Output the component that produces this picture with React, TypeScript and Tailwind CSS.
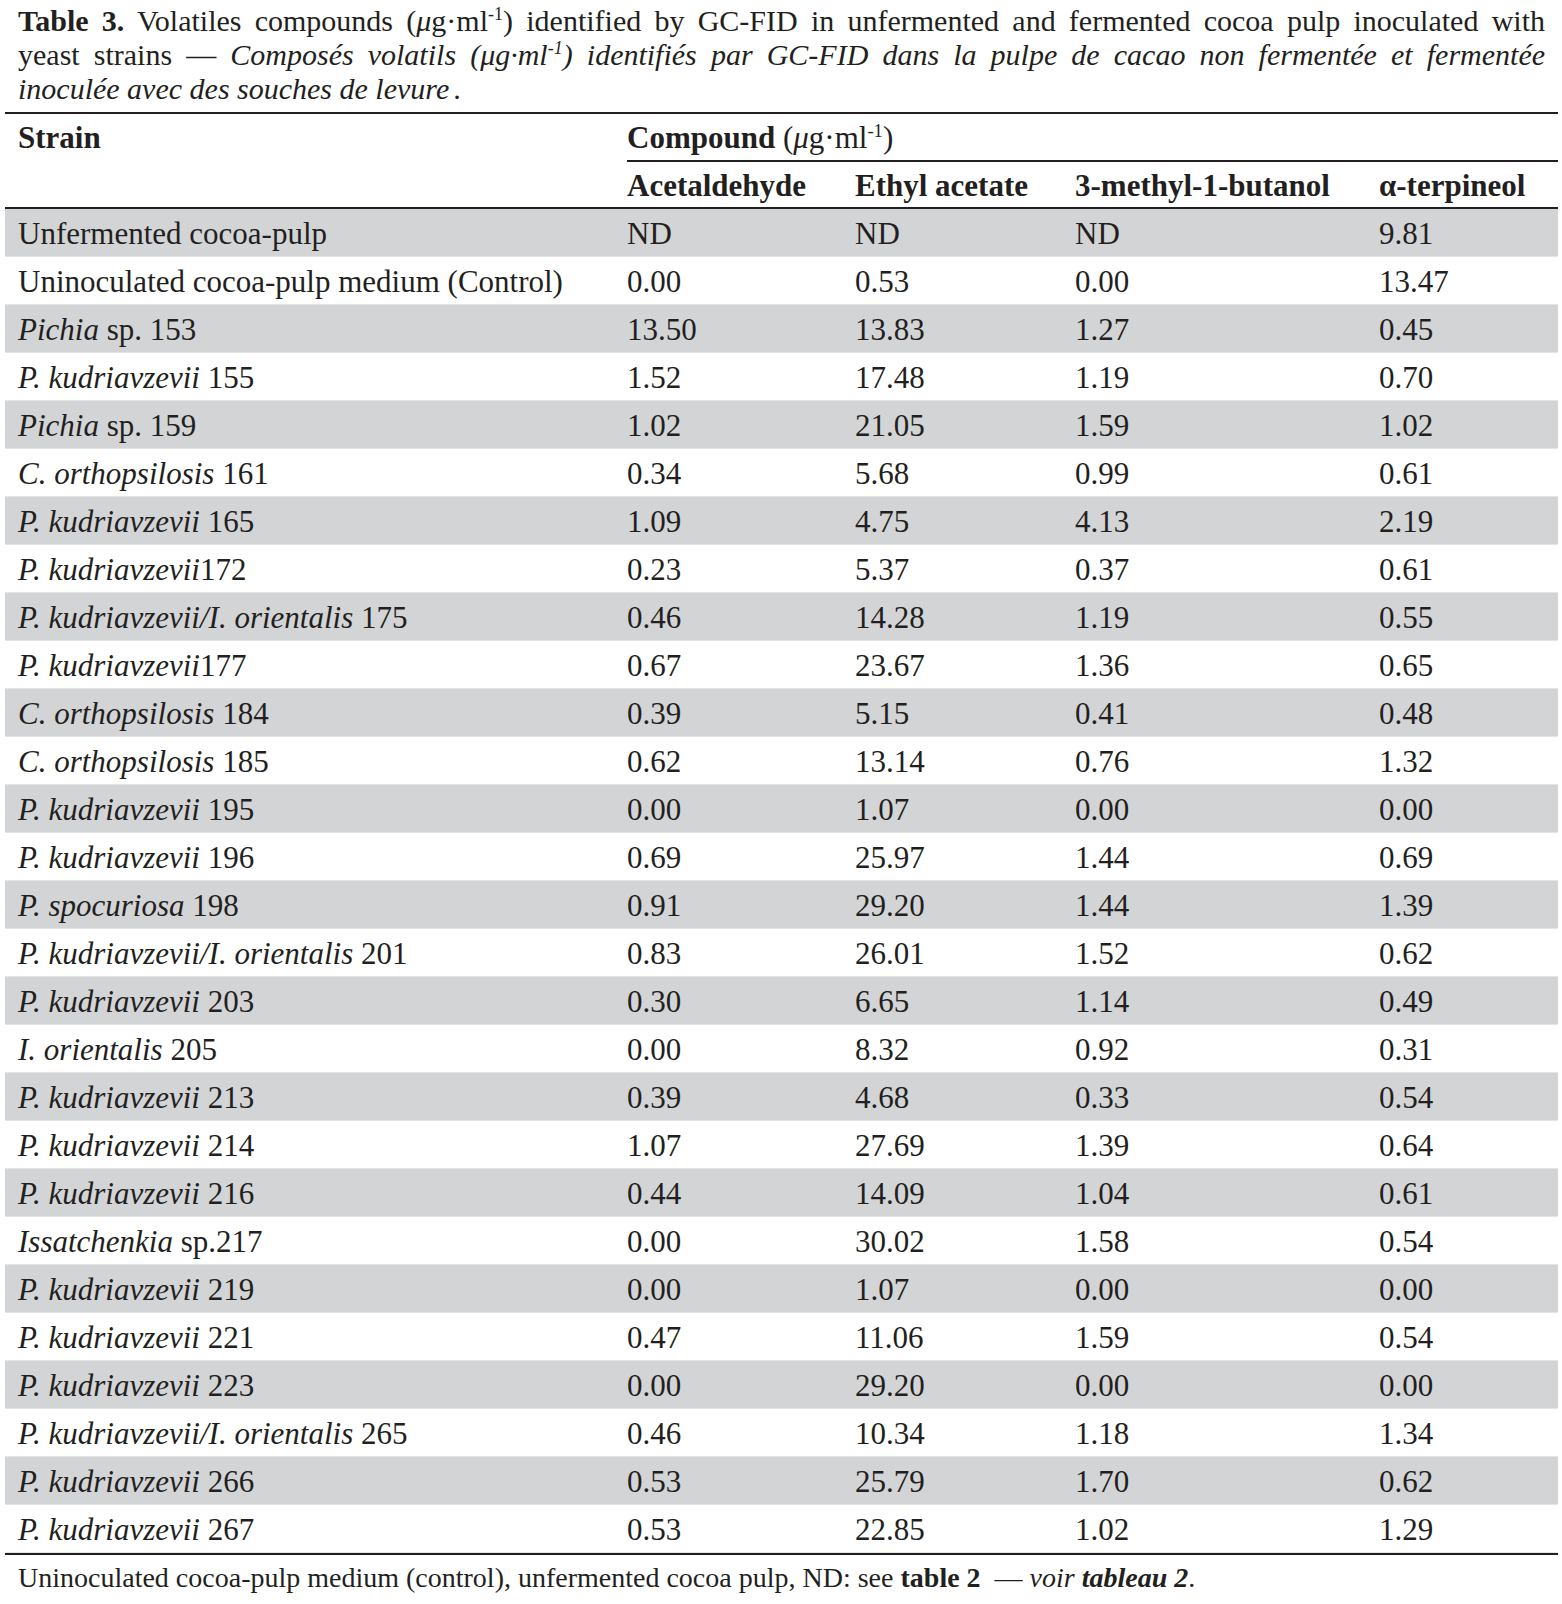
const rows: [string, string, string, string, string, string][] = [
  ['', 'Unfermented cocoa-pulp', 'ND', 'ND', 'ND', '9.81'],
  ['', 'Uninoculated cocoa-pulp medium (Control)', '0.00', '0.53', '0.00', '13.47'],
  ['Pichia', ' sp. 153', '13.50', '13.83', '1.27', '0.45'],
  ['P. kudriavzevii', ' 155', '1.52', '17.48', '1.19', '0.70'],
  ['Pichia', ' sp. 159', '1.02', '21.05', '1.59', '1.02'],
  ['C. orthopsilosis', ' 161', '0.34', '5.68', '0.99', '0.61'],
  ['P. kudriavzevii', ' 165', '1.09', '4.75', '4.13', '2.19'],
  ['P. kudriavzevii', '172', '0.23', '5.37', '0.37', '0.61'],
  ['P. kudriavzevii/I. orientalis', ' 175', '0.46', '14.28', '1.19', '0.55'],
  ['P. kudriavzevii', '177', '0.67', '23.67', '1.36', '0.65'],
  ['C. orthopsilosis', ' 184', '0.39', '5.15', '0.41', '0.48'],
  ['C. orthopsilosis', ' 185', '0.62', '13.14', '0.76', '1.32'],
  ['P. kudriavzevii', ' 195', '0.00', '1.07', '0.00', '0.00'],
  ['P. kudriavzevii', ' 196', '0.69', '25.97', '1.44', '0.69'],
  ['P. spocuriosa', ' 198', '0.91', '29.20', '1.44', '1.39'],
  ['P. kudriavzevii/I. orientalis', ' 201', '0.83', '26.01', '1.52', '0.62'],
  ['P. kudriavzevii', ' 203', '0.30', '6.65', '1.14', '0.49'],
  ['I. orientalis', ' 205', '0.00', '8.32', '0.92', '0.31'],
  ['P. kudriavzevii', ' 213', '0.39', '4.68', '0.33', '0.54'],
  ['P. kudriavzevii', ' 214', '1.07', '27.69', '1.39', '0.64'],
  ['P. kudriavzevii', ' 216', '0.44', '14.09', '1.04', '0.61'],
  ['Issatchenkia', ' sp.217', '0.00', '30.02', '1.58', '0.54'],
  ['P. kudriavzevii', ' 219', '0.00', '1.07', '0.00', '0.00'],
  ['P. kudriavzevii', ' 221', '0.47', '11.06', '1.59', '0.54'],
  ['P. kudriavzevii', ' 223', '0.00', '29.20', '0.00', '0.00'],
  ['P. kudriavzevii/I. orientalis', ' 265', '0.46', '10.34', '1.18', '1.34'],
  ['P. kudriavzevii', ' 266', '0.53', '25.79', '1.70', '0.62'],
  ['P. kudriavzevii', ' 267', '0.53', '22.85', '1.02', '1.29'],
];

const cols = 'grid grid-cols-[609px_228px_220px_304px_192px]';

function Unit() {
  return (
    <span>
      (<i>μ</i>g·ml<sup className="text-[60%] -top-[0.6em]">-1</sup>)
    </span>
  );
}

export default function App() {
  return (
    <div className="min-h-screen bg-white text-[#231f20] font-['Liberation_Serif',serif]">
      {/* Caption */}
      <div className="pt-[4px] pl-[18px] pr-[17px] text-[30px] leading-[34px]">
        <p className="text-justify [text-align-last:justify] whitespace-nowrap">
          <b>Table 3.</b> Volatiles compounds <Unit /> identified by GC-FID in unfermented and fermented cocoa pulp inoculated with
        </p>
        <p className="text-justify [text-align-last:justify] whitespace-nowrap">
          yeast strains —{' '}
          <i>
            Composés volatils (μg·ml<sup className="text-[60%] -top-[0.6em]">-1</sup>) identifiés par GC-FID dans la pulpe de cacao non fermentée et fermentée
          </i>
        </p>
        <p>
          <i>inoculée avec des souches de levure</i>
          <span className="ml-[4px]">.</span>
        </p>
      </div>

      <div className="ml-[5px] mt-[6px] w-[1553px]">
        {/* Header */}
        <div className={`${cols} border-t-2 border-b-2 border-[#231f20] text-[31px]`}>
          <div className="row-span-2 pl-[13px] h-[48px] leading-[48px] font-bold">Strain</div>
          <div className="col-span-4 pl-[13px]">
            <div className="h-[48px] leading-[48px] border-b-2 border-[#231f20]">
              <b>Compound</b> <Unit />
            </div>
          </div>
          {['Acetaldehyde', 'Ethyl acetate', '3-methyl-1-butanol', 'α-terpineol'].map((h) => (
            <div key={h} className="pl-[13px] h-[45px] pt-[3px] leading-[42px] font-bold whitespace-nowrap">
              {h}
            </div>
          ))}
        </div>

        {/* Body */}
        <div className="border-b-2 border-[#231f20] text-[31px]">
          {rows.map((r, i) => (
            <div
              key={i}
              className={`${cols} h-[48px] pt-[2px] leading-[46px] border-b border-[#e4e5e7] ${i % 2 === 0 ? 'bg-[#d3d4d6]' : 'bg-white'}`}
            >
              <div className="pl-[13px] whitespace-nowrap">
                {r[0] && <i>{r[0]}</i>}
                {r[1]}
              </div>
              <div className="pl-[13px]">{r[2]}</div>
              <div className="pl-[13px]">{r[3]}</div>
              <div className="pl-[13px]">{r[4]}</div>
              <div className="pl-[13px]">{r[5]}</div>
            </div>
          ))}
        </div>

        {/* Footnote */}
        <p className="pl-[13px] pt-[3px] text-[28px] leading-[40px] whitespace-nowrap">
          Uninoculated cocoa-pulp medium (control), unfermented cocoa pulp, ND: see <b>table 2</b>
          <span className="ml-[14px]">—</span> <i>voir</i> <b className="italic">tableau 2</b>.
        </p>
      </div>
    </div>
  );
}
